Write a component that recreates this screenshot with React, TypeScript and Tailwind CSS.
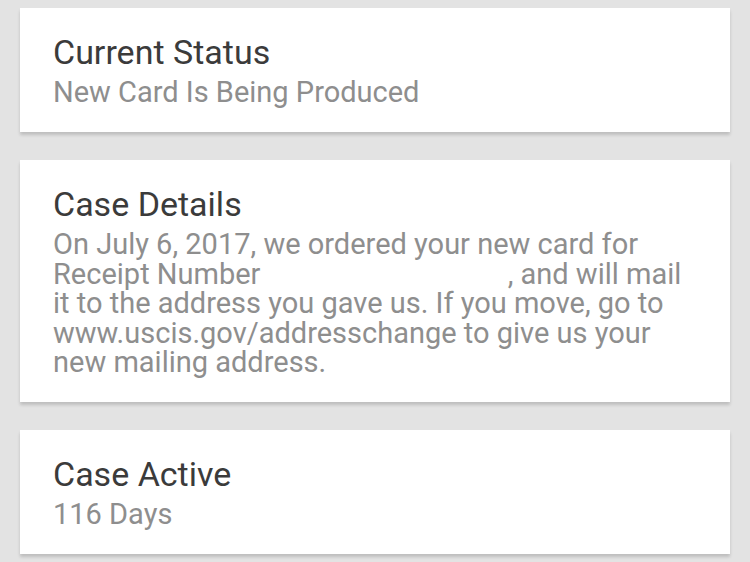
export default function App() {
  return (
    <div className="min-h-[562px] w-[750px] bg-[#e3e3e3] px-5 pt-2 pb-2 flex flex-col gap-7 font-['Roboto',sans-serif]">
      <section className="bg-white shadow-[0_3px_3px_rgba(0,0,0,0.16)] pl-[33px] pr-6 pt-6 pb-[24.5px]">
        <h2 className="text-[34px] leading-[40px] text-[#3b3b3b]">Current Status</h2>
        <p className="mt-1.5 text-[29px] leading-[29.5px] text-[#8e8e8e]">New Card Is Being Produced</p>
      </section>

      <section className="bg-white shadow-[0_3px_3px_rgba(0,0,0,0.16)] pl-[33px] pr-6 pt-6 pb-[24.5px]">
        <h2 className="text-[34px] leading-[40px] text-[#3b3b3b]">Case Details</h2>
        <p className="mt-1.5 text-[29px] leading-[29.5px] text-[#8e8e8e] whitespace-nowrap">
          On July 6, 2017, we ordered your new card for
          <br />
          Receipt Number <span className="inline-block w-[240px]" />, and will mail
          <br />
          it to the address you gave us. If you move, go to
          <br />
          www.uscis.gov/addresschange to give us your
          <br />
          new mailing address.
        </p>
      </section>

      <section className="bg-white shadow-[0_3px_3px_rgba(0,0,0,0.16)] pl-[33px] pr-6 pt-6 pb-[24.5px]">
        <h2 className="text-[34px] leading-[40px] text-[#3b3b3b]">Case Active</h2>
        <p className="mt-1.5 text-[29px] leading-[29.5px] text-[#8e8e8e]">116 Days</p>
      </section>
    </div>
  )
}
